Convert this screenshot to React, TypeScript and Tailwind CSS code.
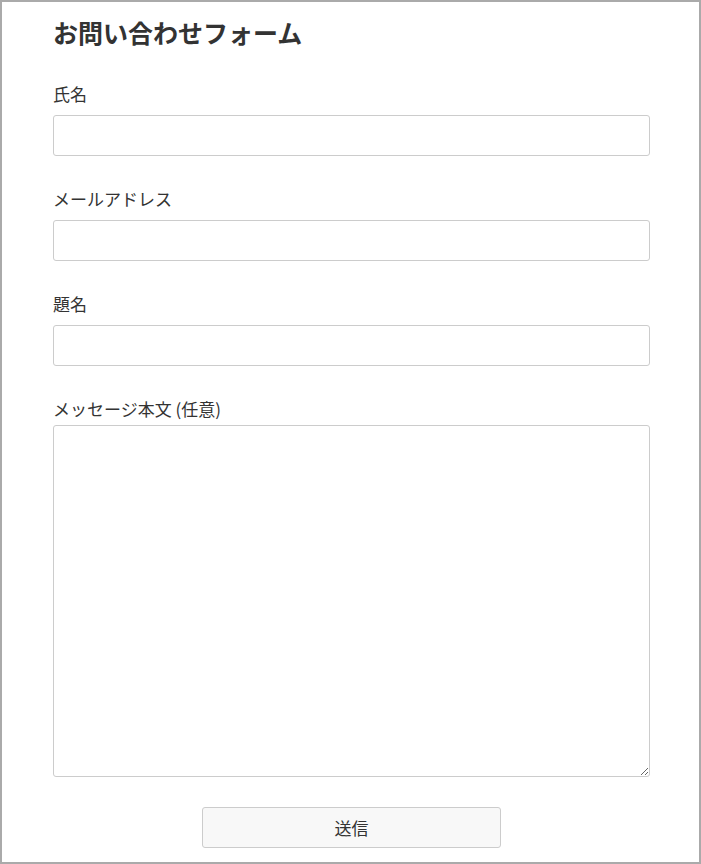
import React from 'react';

const font = { fontFamily: '"Noto Sans CJK JP", "Noto Sans", sans-serif' };

const Field: React.FC<{ label: string; gap?: string; children: React.ReactNode }> = ({ label, gap = 'mb-[9px]', children }) => (
  <div className="mt-[31px] first:mt-0">
    <label className={`block text-[17px] leading-[24px] text-[#333] ${gap}`}>{label}</label>
    {children}
  </div>
);

export default function App() {
  return (
    <div
      className="w-[701px] h-[864px] border-2 border-[#aaa] bg-white overflow-hidden box-border"
      style={font}
    >
      <div className="pl-[51px] pr-[49px] pt-[12px]">
        <h1 className="text-[25px] leading-[36px] font-bold text-[#333] mb-[32px]">お問い合わせフォーム</h1>
        <form onSubmit={e => e.preventDefault()}>
          <Field label="氏名">
            <input type="text" className="block w-full h-[41px] border border-[#ccc] rounded-[3px] px-2 outline-none" />
          </Field>
          <Field label="メールアドレス">
            <input type="email" className="block w-full h-[41px] border border-[#ccc] rounded-[3px] px-2 outline-none" />
          </Field>
          <Field label="題名">
            <input type="text" className="block w-full h-[41px] border border-[#ccc] rounded-[3px] px-2 outline-none" />
          </Field>
          <Field label="メッセージ本文 (任意)" gap="mb-[4px]">
            <textarea className="block w-full h-[352px] border border-[#ccc] rounded-[3px] px-2 outline-none resize-y" />
          </Field>
          <div className="flex justify-center mt-[30px]">
            <button
              type="submit"
              className="w-[299px] h-[41px] bg-[#f8f8f8] border border-[#ccc] rounded-[3px] text-[17px] text-[#333]"
            >
              送信
            </button>
          </div>
        </form>
      </div>
    </div>
  );
}
